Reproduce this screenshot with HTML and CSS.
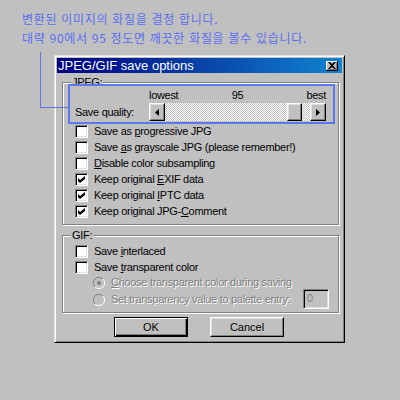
FILE: index.html
```html
<!DOCTYPE html>
<html lang="ko">
<head>
  <meta charset="UTF-8">
  <title>JPEG/GIF save options</title>
  <link rel="stylesheet" href="styles.css">
</head>
<body>
  <div class="note">
    <p>변환된 이미지의 화질을 결정 합니다.</p>
    <p>대략 90에서 95 정도면 깨끗한 화질을 볼수 있습니다.</p>
  </div>

  <div class="dialog">
    <div class="titlebar">
      <span>JPEG/GIF save options</span>
      <span class="close">
        <svg width="8" height="7" viewBox="0 0 8 7"><path d="M0 0h2l2 2 2-2h2l-3 3.5 3 3.5h-2l-2-2-2 2h-2l3-3.5z"/></svg>
      </span>
    </div>

    <div class="panel">
      <fieldset class="group">
        <legend>JPEG:</legend>
        <div class="group-body">
          <div class="quality">
            <div class="scale"><span>lowest</span><span>95</span><span>best</span></div>
            <span class="quality-label">Save quality:</span>
            <div class="scrollbar">
              <span class="sb-btn"><svg width="4" height="7" viewBox="0 0 4 7"><path d="M4 0v7L0 3.5z"/></svg></span>
              <span class="sb-track"><span class="sb-thumb" style="margin-left: 122px"></span></span>
              <span class="sb-btn"><svg width="4" height="7" viewBox="0 0 4 7"><path d="M0 0v7l4-3.5z"/></svg></span>
            </div>
          </div>

          <div class="checks">
            <label class="check"><span class="box"></span><span>Save as <u>p</u>rogressive JPG</span></label>
            <label class="check"><span class="box"></span><span>Save <u>a</u>s grayscale JPG (please remember!)</span></label>
            <label class="check"><span class="box"></span><span><u>D</u>isable color subsampling</span></label>
            <label class="check"><span class="box checked"><svg width="7" height="7" viewBox="0 0 7 7"><path d="M0 2l2 2 5-4v3l-5 4-2-2z"/></svg></span><span>Keep original <u>E</u>XIF data</span></label>
            <label class="check"><span class="box checked"><svg width="7" height="7" viewBox="0 0 7 7"><path d="M0 2l2 2 5-4v3l-5 4-2-2z"/></svg></span><span>Keep original <u>I</u>PTC data</span></label>
            <label class="check"><span class="box checked"><svg width="7" height="7" viewBox="0 0 7 7"><path d="M0 2l2 2 5-4v3l-5 4-2-2z"/></svg></span><span>Keep original JPG-<u>C</u>omment</span></label>
          </div>
        </div>
      </fieldset>

      <fieldset class="group gif">
        <legend>GIF:</legend>
        <div class="group-body">
          <label class="check"><span class="box"></span><span>Save <u>i</u>nterlaced</span></label>
          <label class="check"><span class="box"></span><span>Save <u>t</u>ransparent color</span></label>
          <div class="radio radio-first">
            <svg class="radio-dot" width="12" height="12" viewBox="0 0 12 12">
              <path d="M10 2A5.5 5.5 0 0 0 2 10" fill="none" stroke="#808080"/>
              <path d="M2 10A5.5 5.5 0 0 0 10 2" fill="none" stroke="#fff"/>
              <circle cx="6" cy="6" r="2" fill="#808080"/>
            </svg>
            <span class="disabled"><u>C</u>hoose transparent color during saving</span>
          </div>
          <div class="radio">
            <svg class="radio-dot" width="12" height="12" viewBox="0 0 12 12">
              <path d="M10 2A5.5 5.5 0 0 0 2 10" fill="none" stroke="#808080"/>
              <path d="M2 10A5.5 5.5 0 0 0 10 2" fill="none" stroke="#fff"/>
            </svg>
            <span class="disabled">Set transparency value to palette entry:</span>
            <span class="entry">0</span>
          </div>
        </div>
      </fieldset>

      <div class="buttons">
        <button class="btn btn-default">OK</button>
        <button class="btn">Cancel</button>
      </div>
    </div>
  </div>

  <!-- annotation over the quality slider -->
  <div class="callout-line"></div>
  <div class="callout-box"></div>
</body>
</html>
```

FILE: styles.css
```css
body {
  margin: 0;
  background: #c0c0c0;
  font: 11px "Liberation Sans", Arial, sans-serif;
  letter-spacing: -0.3px;
  color: #000;
}
.note {
  padding: 9px 0 0 22px;
  font: 12px "Noto Sans CJK KR", sans-serif;
  letter-spacing: 0.7px;
  color: #5a6ef0;
}
.note p {
  margin: 0;
  line-height: 19px;
}
.dialog {
  margin: 8px 0 0 54px;
  width: 291px;
  height: 288px;
  box-sizing: border-box;
  padding: 2px;
  border: 1px solid;
  border-color: #dfdfdf #000 #000 #dfdfdf;
  box-shadow: inset 1px 1px #fff, inset -1px -1px #808080;
}
.titlebar {
  height: 15px;
  display: flex;
  align-items: center;
  justify-content: space-between;
  padding: 0 4px 0 1px;
  background: linear-gradient(to right, #000080, #1084d0);
  color: #fff;
  font-size: 13px;
  letter-spacing: 0;
}
.close {
  width: 12px;
  height: 10px;
  box-sizing: border-box;
  display: flex;
  align-items: center;
  justify-content: center;
  background: #c0c0c0;
  border-right: 1px solid #000;
  border-bottom: 1px solid #000;
  box-shadow: inset 1px 1px #fff, inset -1px -1px #808080;
}
.panel {
  padding: 3px 0 0 5px;
}
.group {
  margin: 0;
  padding: 0;
  min-width: 0;
  width: 277px;
  box-sizing: border-box;
  border: 1px solid #808080;
  box-shadow: inset 1px 1px #fff, 1px 1px #fff;
}
.group legend {
  margin-left: 8px;
  padding: 0 1px;
  line-height: 13px;
  background: #c0c0c0;
}
.group-body {
  padding: 0 9px 4px 12px;
}
.gif {
  margin-top: 4px;
}
.gif .group-body {
  padding-top: 2px;
  padding-bottom: 3px;
}
.quality {
  display: grid;
  grid-template-columns: 74px 177px;
  row-gap: 2px;
  align-items: center;
}
.scale {
  grid-column: 2;
  display: grid;
  grid-template-columns: 1fr auto 1fr;
  line-height: 12px;
}
.scale span:last-child {
  text-align: right;
}
.scrollbar {
  display: flex;
  height: 18px;
}
.sb-btn, .sb-thumb, .btn {
  box-sizing: border-box;
  background: #c0c0c0;
  border: 1px solid;
  border-color: #fff #000 #000 #fff;
  box-shadow: inset -1px -1px #808080, inset 1px 1px #dfdfdf;
}
.sb-btn {
  width: 16px;
  display: flex;
  align-items: center;
  justify-content: center;
}
.sb-track {
  flex: 1;
  display: flex;
  background: repeating-conic-gradient(#fff 0 25%, #c0c0c0 0 50%) 0 0 / 2px 2px;
}
.sb-thumb {
  width: 15px;
}
.checks {
  margin-top: 3px;
}
.check {
  display: flex;
  gap: 6px;
  height: 16px;
  line-height: 15px;
  white-space: nowrap;
}
.box {
  width: 13px;
  height: 13px;
  margin-top: 1px;
  box-sizing: border-box;
  display: flex;
  align-items: center;
  justify-content: center;
  background: #fff;
  border: 1px solid;
  border-color: #808080 #fff #fff #808080;
  box-shadow: inset 1px 1px #000, inset -1px -1px #dfdfdf;
}
.radio {
  display: flex;
  align-items: center;
  gap: 6px;
  height: 20px;
  padding-left: 18px;
  white-space: nowrap;
}
.radio-first {
  height: 13px;
  align-items: flex-start;
  line-height: 13px;
}
.radio-dot {
  flex: none;
  margin-top: 1px;
}
.disabled {
  color: #808080;
  text-shadow: 1px 1px #fff;
}
.entry {
  margin-left: auto;
  width: 26px;
  height: 20px;
  box-sizing: border-box;
  padding: 2px 3px;
  color: #808080;
  border: 1px solid;
  border-color: #808080 #fff #fff #808080;
  box-shadow: inset 1px 1px #000, inset -1px -1px #dfdfdf;
}
.buttons {
  display: flex;
  justify-content: center;
  gap: 22px;
  margin-top: 4px;
  padding-right: 6px;
}
.btn {
  width: 74px;
  height: 20px;
  padding: 0;
  font: 11px "Liberation Sans", Arial, sans-serif;
  color: #000;
}
.btn-default {
  border-color: #000;
  box-shadow: inset 1px 1px #fff, inset -1px -1px #000, inset -2px -2px #808080;
}
.callout-line {
  position: absolute;
  left: 40px;
  top: 52px;
  width: 28px;
  height: 56px;
  box-sizing: border-box;
  border-left: 1px solid #5a78f0;
  border-bottom: 1px solid #5a78f0;
}
.callout-box {
  position: absolute;
  left: 68px;
  top: 84px;
  width: 267px;
  height: 40px;
  box-sizing: border-box;
  border: 2px solid #5a78f0;
}
```
